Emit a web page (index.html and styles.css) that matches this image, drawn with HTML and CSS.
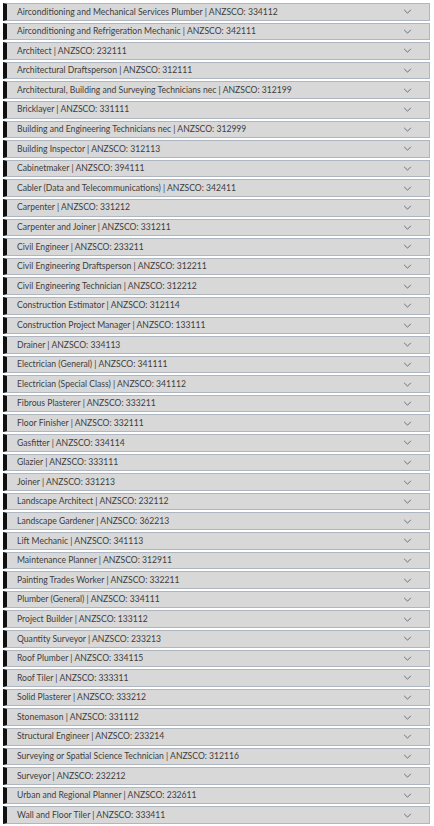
FILE: index.html
```html
<!DOCTYPE html>
<html lang="en">
<head>
<meta charset="utf-8">
<title>Occupations</title>
<link rel="stylesheet" href="styles.css">
</head>
<body>
<div class="list">
  <div class="item"><span class="label">Airconditioning and Mechanical Services Plumber | ANZSCO: 334112</span><svg class="chev" viewBox="0 0 10 6"><polyline points="1,1 5,5 9,1"/></svg></div>
  <div class="item"><span class="label">Airconditioning and Refrigeration Mechanic | ANZSCO: 342111</span><svg class="chev" viewBox="0 0 10 6"><polyline points="1,1 5,5 9,1"/></svg></div>
  <div class="item"><span class="label">Architect | ANZSCO: 232111</span><svg class="chev" viewBox="0 0 10 6"><polyline points="1,1 5,5 9,1"/></svg></div>
  <div class="item"><span class="label">Architectural Draftsperson | ANZSCO: 312111</span><svg class="chev" viewBox="0 0 10 6"><polyline points="1,1 5,5 9,1"/></svg></div>
  <div class="item"><span class="label">Architectural, Building and Surveying Technicians nec | ANZSCO: 312199</span><svg class="chev" viewBox="0 0 10 6"><polyline points="1,1 5,5 9,1"/></svg></div>
  <div class="item"><span class="label">Bricklayer | ANZSCO: 331111</span><svg class="chev" viewBox="0 0 10 6"><polyline points="1,1 5,5 9,1"/></svg></div>
  <div class="item"><span class="label">Building and Engineering Technicians nec | ANZSCO: 312999</span><svg class="chev" viewBox="0 0 10 6"><polyline points="1,1 5,5 9,1"/></svg></div>
  <div class="item"><span class="label">Building Inspector | ANZSCO: 312113</span><svg class="chev" viewBox="0 0 10 6"><polyline points="1,1 5,5 9,1"/></svg></div>
  <div class="item"><span class="label">Cabinetmaker | ANZSCO: 394111</span><svg class="chev" viewBox="0 0 10 6"><polyline points="1,1 5,5 9,1"/></svg></div>
  <div class="item"><span class="label">Cabler (Data and Telecommunications) | ANZSCO: 342411</span><svg class="chev" viewBox="0 0 10 6"><polyline points="1,1 5,5 9,1"/></svg></div>
  <div class="item"><span class="label">Carpenter | ANZSCO: 331212</span><svg class="chev" viewBox="0 0 10 6"><polyline points="1,1 5,5 9,1"/></svg></div>
  <div class="item"><span class="label">Carpenter and Joiner | ANZSCO: 331211</span><svg class="chev" viewBox="0 0 10 6"><polyline points="1,1 5,5 9,1"/></svg></div>
  <div class="item"><span class="label">Civil Engineer | ANZSCO: 233211</span><svg class="chev" viewBox="0 0 10 6"><polyline points="1,1 5,5 9,1"/></svg></div>
  <div class="item"><span class="label">Civil Engineering Draftsperson | ANZSCO: 312211</span><svg class="chev" viewBox="0 0 10 6"><polyline points="1,1 5,5 9,1"/></svg></div>
  <div class="item"><span class="label">Civil Engineering Technician | ANZSCO: 312212</span><svg class="chev" viewBox="0 0 10 6"><polyline points="1,1 5,5 9,1"/></svg></div>
  <div class="item"><span class="label">Construction Estimator | ANZSCO: 312114</span><svg class="chev" viewBox="0 0 10 6"><polyline points="1,1 5,5 9,1"/></svg></div>
  <div class="item"><span class="label">Construction Project Manager | ANZSCO: 133111</span><svg class="chev" viewBox="0 0 10 6"><polyline points="1,1 5,5 9,1"/></svg></div>
  <div class="item"><span class="label">Drainer | ANZSCO: 334113</span><svg class="chev" viewBox="0 0 10 6"><polyline points="1,1 5,5 9,1"/></svg></div>
  <div class="item"><span class="label">Electrician (General) | ANZSCO: 341111</span><svg class="chev" viewBox="0 0 10 6"><polyline points="1,1 5,5 9,1"/></svg></div>
  <div class="item"><span class="label">Electrician (Special Class) | ANZSCO: 341112</span><svg class="chev" viewBox="0 0 10 6"><polyline points="1,1 5,5 9,1"/></svg></div>
  <div class="item"><span class="label">Fibrous Plasterer | ANZSCO: 333211</span><svg class="chev" viewBox="0 0 10 6"><polyline points="1,1 5,5 9,1"/></svg></div>
  <div class="item"><span class="label">Floor Finisher | ANZSCO: 332111</span><svg class="chev" viewBox="0 0 10 6"><polyline points="1,1 5,5 9,1"/></svg></div>
  <div class="item"><span class="label">Gasfitter | ANZSCO: 334114</span><svg class="chev" viewBox="0 0 10 6"><polyline points="1,1 5,5 9,1"/></svg></div>
  <div class="item"><span class="label">Glazier | ANZSCO: 333111</span><svg class="chev" viewBox="0 0 10 6"><polyline points="1,1 5,5 9,1"/></svg></div>
  <div class="item"><span class="label">Joiner | ANZSCO: 331213</span><svg class="chev" viewBox="0 0 10 6"><polyline points="1,1 5,5 9,1"/></svg></div>
  <div class="item"><span class="label">Landscape Architect | ANZSCO: 232112</span><svg class="chev" viewBox="0 0 10 6"><polyline points="1,1 5,5 9,1"/></svg></div>
  <div class="item"><span class="label">Landscape Gardener | ANZSCO: 362213</span><svg class="chev" viewBox="0 0 10 6"><polyline points="1,1 5,5 9,1"/></svg></div>
  <div class="item"><span class="label">Lift Mechanic | ANZSCO: 341113</span><svg class="chev" viewBox="0 0 10 6"><polyline points="1,1 5,5 9,1"/></svg></div>
  <div class="item"><span class="label">Maintenance Planner | ANZSCO: 312911</span><svg class="chev" viewBox="0 0 10 6"><polyline points="1,1 5,5 9,1"/></svg></div>
  <div class="item"><span class="label">Painting Trades Worker | ANZSCO: 332211</span><svg class="chev" viewBox="0 0 10 6"><polyline points="1,1 5,5 9,1"/></svg></div>
  <div class="item"><span class="label">Plumber (General) | ANZSCO: 334111</span><svg class="chev" viewBox="0 0 10 6"><polyline points="1,1 5,5 9,1"/></svg></div>
  <div class="item"><span class="label">Project Builder | ANZSCO: 133112</span><svg class="chev" viewBox="0 0 10 6"><polyline points="1,1 5,5 9,1"/></svg></div>
  <div class="item"><span class="label">Quantity Surveyor | ANZSCO: 233213</span><svg class="chev" viewBox="0 0 10 6"><polyline points="1,1 5,5 9,1"/></svg></div>
  <div class="item"><span class="label">Roof Plumber | ANZSCO: 334115</span><svg class="chev" viewBox="0 0 10 6"><polyline points="1,1 5,5 9,1"/></svg></div>
  <div class="item"><span class="label">Roof Tiler | ANZSCO: 333311</span><svg class="chev" viewBox="0 0 10 6"><polyline points="1,1 5,5 9,1"/></svg></div>
  <div class="item"><span class="label">Solid Plasterer | ANZSCO: 333212</span><svg class="chev" viewBox="0 0 10 6"><polyline points="1,1 5,5 9,1"/></svg></div>
  <div class="item"><span class="label">Stonemason | ANZSCO: 331112</span><svg class="chev" viewBox="0 0 10 6"><polyline points="1,1 5,5 9,1"/></svg></div>
  <div class="item"><span class="label">Structural Engineer | ANZSCO: 233214</span><svg class="chev" viewBox="0 0 10 6"><polyline points="1,1 5,5 9,1"/></svg></div>
  <div class="item"><span class="label">Surveying or Spatial Science Technician | ANZSCO: 312116</span><svg class="chev" viewBox="0 0 10 6"><polyline points="1,1 5,5 9,1"/></svg></div>
  <div class="item"><span class="label">Surveyor | ANZSCO: 232212</span><svg class="chev" viewBox="0 0 10 6"><polyline points="1,1 5,5 9,1"/></svg></div>
  <div class="item"><span class="label">Urban and Regional Planner | ANZSCO: 232611</span><svg class="chev" viewBox="0 0 10 6"><polyline points="1,1 5,5 9,1"/></svg></div>
  <div class="item"><span class="label">Wall and Floor Tiler | ANZSCO: 333411</span><svg class="chev" viewBox="0 0 10 6"><polyline points="1,1 5,5 9,1"/></svg></div>
</div>
</body>
</html>
```
FILE: styles.css
```css
html, body {
  margin: 0;
  padding: 0;
  background: #ffffff;
}

body {
  font-family: Lato, "Noto Sans", "Liberation Sans", sans-serif;
  color: #3d3d3d;
}

.list {
  display: flex;
  flex-direction: column;
  gap: 2px;
  padding: 3px 4px 0 3px;
}

.item {
  box-sizing: border-box;
  height: 17.6px;
  display: flex;
  align-items: center;
  justify-content: space-between;
  background: #d8d8d8;
  border: 1px solid #aeb6c2;
  border-left: 4px solid #111111;
  padding: 0 17px 0 10px;
}

.label {
  font-size: 8.6px;
  line-height: 1;
  white-space: nowrap;
}

.chev {
  width: 9px;
  height: 5px;
  fill: none;
  stroke: #555b63;
  stroke-width: 1;
}
```
